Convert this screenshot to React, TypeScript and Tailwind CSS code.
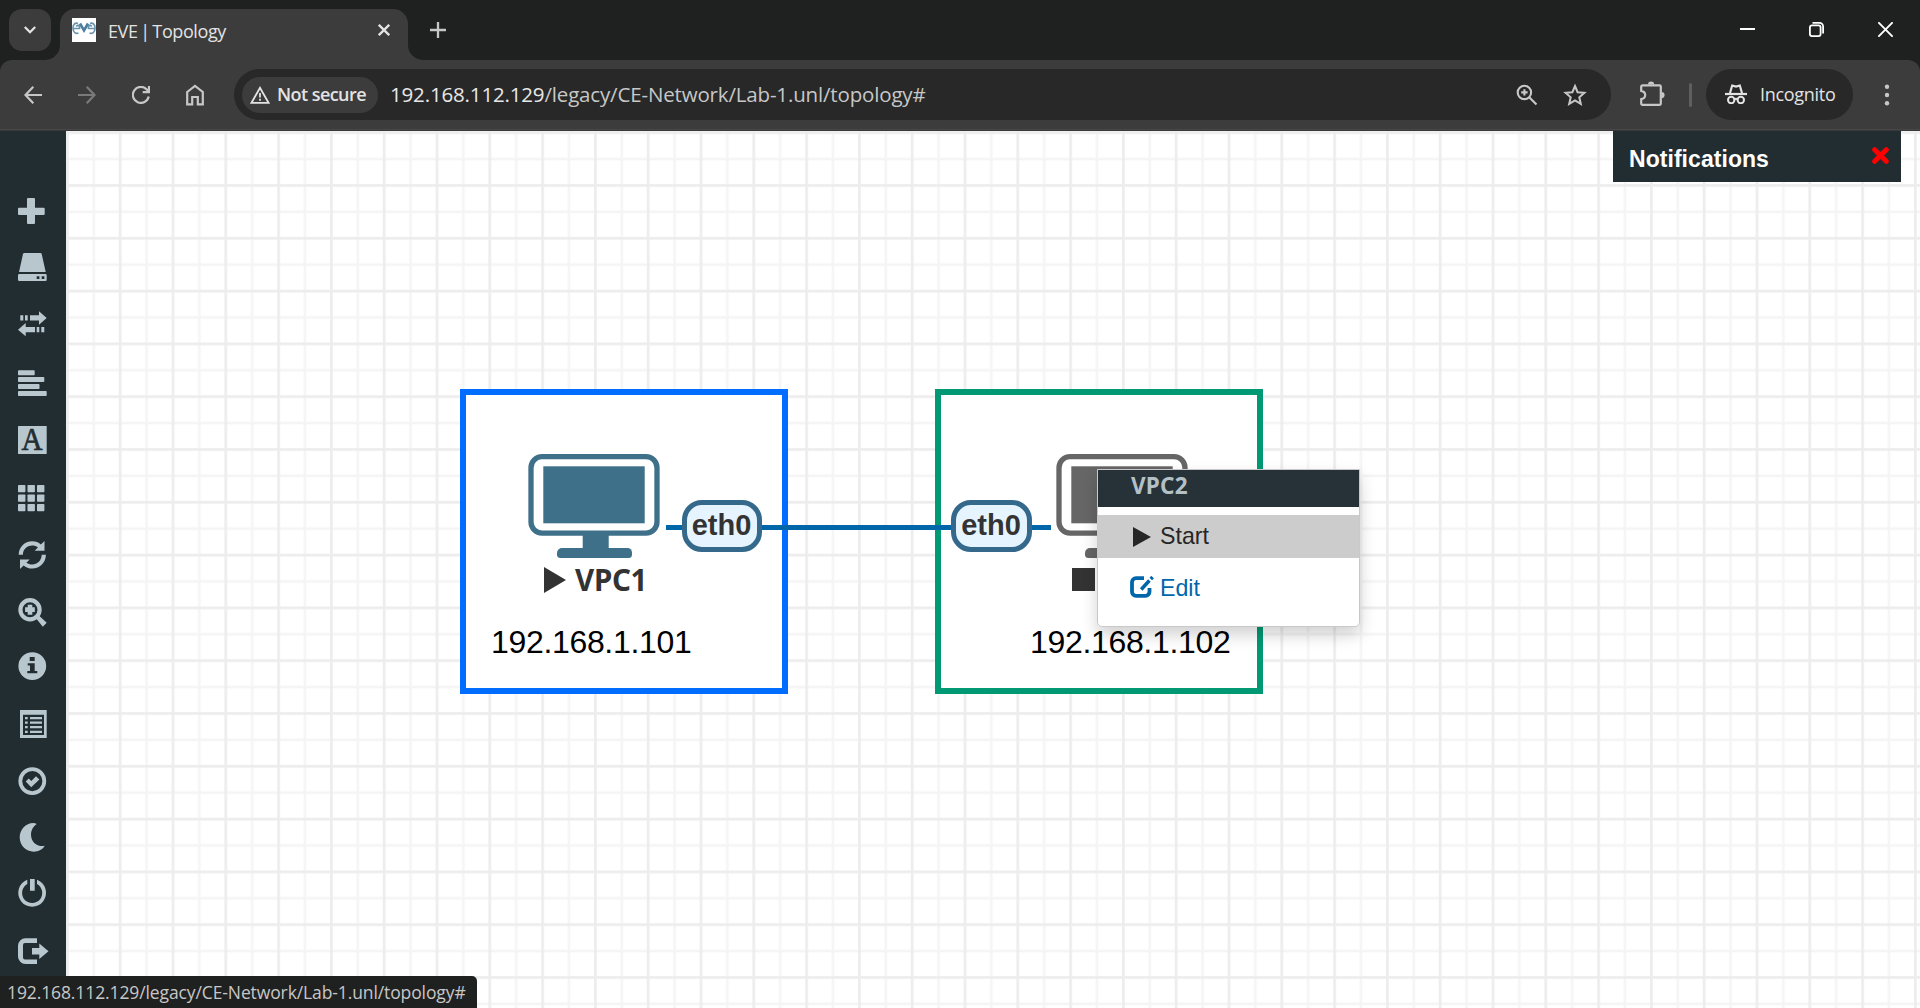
import React from "react";

type IconProps = { className?: string };

const Icon = ({ className, children }: { className?: string; children: React.ReactNode }) => (
  <svg viewBox="0 0 30 30" className={`block h-[30px] w-[32px] shrink-0 overflow-visible ${className ?? ""}`} preserveAspectRatio="xMinYMin" fill="currentColor">
    {children}
  </svg>
);

const sideIcons: { name: string; gap: string; art: React.ReactNode }[] = [
  { name: "add", gap: "mt-[67px]", art: <path d="M10 0h6a1 1 0 0 1 1 1v8.7h8.7a1 1 0 0 1 1 1v5.300a1 1 0 0 1-1 1H17v8a1 1 0 0 1-1 1h-6a1 1 0 0 1-1-1v-8H1a1 1 0 0 1-1-1v-5.300a1 1 0 0 1 1-1h8V1a1 1 0 0 1 1-1z" /> },
  { name: "nodes", gap: "mt-[25px]", art: <path fillRule="evenodd" d="M6.300 0h16.200a1.300 1.300 0 0 1 1.200 1l4 18H1l4-18a1.300 1.300 0 0 1 1.300-1zM1.300 21h26.100a1.300 1.300 0 0 1 1.300 1.300v4.400a1.300 1.300 0 0 1-1.300 1.300H1.300A1.300 1.300 0 0 1 0 26.700v-4.400A1.300 1.300 0 0 1 1.300 21zM18.700 23.200v2.700h2.700v-2.700zM23.700 23.200v2.700h2.700v-2.700z" /> },
  { name: "networks", gap: "mt-[27px]", art: <path d="M2.300 5.300h3v5.300h-3zM7 5.300h2.700v5.300H7zM12 5.300h9V1.200L28.700 8 21 14.700v-4.100h-9zM0 19.700l7.700-6.600v4H17v5.200H7.700v4zM18.700 17h2.600v5.300h-2.600zM23.300 17h3v5.300h-3z" /> },
  { name: "startup-configs", gap: "mt-[29px]", art: <g><rect y="1.200" width="16.700" height="5" rx=".8" /><rect y="8" width="26.300" height="5" rx=".8" /><rect y="15" width="21.500" height="5" rx=".8" /><rect y="22" width="28.700" height="5" rx=".8" /></g> },
  { name: "logical-map", gap: "mt-[27px]", art: <g><rect width="28.700" height="28" rx=".6" /><text x="14" y="23.500" textAnchor="middle" fill="#222d32" stroke="#222d32" strokeWidth=".7" fontFamily="Liberation Serif, serif" fontSize="32" textLength="21" lengthAdjust="spacingAndGlyphs">A</text></g> },
  { name: "grid", gap: "mt-[29px]", art: <g>{[0, 9.5, 19].map((y) => [0, 9.5, 19].map((x) => <rect key={`${x}-${y}`} x={x} y={y} width="7.400" height="7.200" rx=".8" />))}</g> },
  { name: "refresh", gap: "mt-[26px]", art: <path d="M.7 13.700C.7 6.200 6.500.2 14.200.2c3.500 0 6.300 1.100 8.700 3.200L26.500 0v9.700h-9.800l3.200-3.300c-1.600-1.400-3.500-2-5.700-2-5.300 0-9.300 4-9.300 9.300zM27.900 13.700c0 7.700-6 13.900-13.700 13.900-3.400 0-6.300-1.200-8.600-3.200L2 28v-9.500h9.700l-3.300 3.200c1.700 1.200 3.600 1.800 5.800 1.800 5.300 0 9.500-4.400 9.500-9.800z" /> },
  { name: "zoom", gap: "mt-[27px]", art: <g><path fillRule="evenodd" d="M12 0a11.700 11.700 0 1 1 0 23.400A11.700 11.700 0 0 1 12 0zm0 4.200a7.500 7.500 0 1 0 0 15 7.500 7.500 0 0 0 0-15z" /><path d="M17.600 19.700l2.800-2.800 8.300 7.900-3.900 4zM9.700 6.700h4.600v2.600h2.500v4.800h-2.500v2.600H9.700v-2.600H7.100V9.300h2.600z" /></g> },
  { name: "status", gap: "mt-[24px]", art: <path fillRule="evenodd" d="M14.300.2a13.900 13.900 0 1 1 0 27.800 13.900 13.900 0 0 1 0-27.800zM11.700 5v4h5V5zM9.700 11.300v2.300h2.300v5.400H9.300v2.300h10V19h-2.600v-7.700z" /> },
  { name: "objects", gap: "mt-[28px]", art: <path fillRule="evenodd" d="M2 0h26.700v28H2zM5 4.700V25h21V4.700zM7 7h2.700v2.300H7zm5 0h12v2.300H12zM7 11.400h2.700v2.300H7zm5 0h12v2.300H12zM7 16h2.700v2.300H7zm5 0h12v2.300H12zM7 20.700h2.700V23H7zm5 0h12V23H12z" /> },
  { name: "check", gap: "mt-[27px]", art: <path fillRule="evenodd" d="M14.300.2a13.900 13.900 0 1 1 0 27.800 13.900 13.900 0 0 1 0-27.800zm0 3.800a10.100 10.100 0 1 0 0 20.200 10.100 10.100 0 0 0 0-20.200zM7.700 14.400l3.100-3 2.500 2.500 4.700-4.600 3.400 3.100-8.200 7.900z" /> },
  { name: "dark-mode", gap: "mt-[26px]", art: <path d="M18.700.9C15.300 3.200 13 7 13 11.700c0 6.500 5 11.400 11.300 11.400 1 0 1.700-.1 2.500-.3-2.100 3.500-6.300 5.900-11 5.900C7.900 28.700 1.700 22.500 1.700 14.600S7.700.2 15.300.1c1.200 0 2.300.2 3.400.8z" /> },
  { name: "lock", gap: "mt-[25px]", art: <path d="M12 1h4.700v11.800H12zM9.300 1.800v4.300A10.100 10.100 0 1 0 19 6.100V1.800A13.900 13.900 0 1 1 9.300 1.800z" /> },
  { name: "logout", gap: "mt-[29px]", art: <path d="M7.500 1.200H19v4.700H7a2 2 0 0 0-2 2v12.500a2 2 0 0 0 2 2h12V27H7.500A7.500 7.500 0 0 1 0 19.500v-10.800A7.500 7.500 0 0 1 7.500 1.200zM14 10.900h7.300V6.600l9.200 7.700-9.200 7.600v-4.300H14z" /> },
];

const Favicon = () => (
  <svg viewBox="0 0 24 24" className="h-6 w-6 bg-white" fill="none" stroke="#4c7f9f" strokeWidth="2">
    <path d="M6 5.500C3 4.500.8 6.500 1 10.500s2.800 5.500 5.500 4.500M2 10.500h5.500V8.300C7 7 5 7 4.200 8.500" strokeWidth="1.700" opacity=".85" />
    <path d="M18 5.500c3-1 5.200 1 5 5s-2.800 5.500-5.500 4.500M22 10.500h-5.500V8.300C17 7 19 7 19.800 8.500" strokeWidth="1.700" opacity=".85" />
    <path d="M8 5.500l4 7 4-7" strokeWidth="2.600" />
  </svg>
);

const TabStrip = () => (
  <div className="flex h-[60px] items-start bg-[#1f2120] pl-[9px] pt-[9px]">
    <div className="flex h-[42px] w-[42px] items-center justify-center rounded-[13px] bg-[#3c3c3c]">
      <svg viewBox="0 0 12 8" className="h-2 w-3" fill="none" stroke="#e3e3e3" strokeWidth="2.300"><path d="M.8 1l5.200 5.200L11.200 1" /></svg>
    </div>
    <div className="relative ml-[9px] flex h-[51px] w-[348px] items-start rounded-t-[15px] bg-[#3c3c3c] pl-3 pt-[9px]">
      <svg viewBox="0 0 15 15" className="absolute -left-[15px] bottom-0 h-[15px] w-[15px]" fill="#3c3c3c"><path d="M15 0v15H0A15 15 0 0 0 15 0z" /></svg>
      <svg viewBox="0 0 15 15" className="absolute -right-[15px] bottom-0 h-[15px] w-[15px]" fill="#3c3c3c"><path d="M0 0v15h15A15 15 0 0 1 0 0z" /></svg>
      <Favicon />
      <span className="ml-3 w-[260px] whitespace-nowrap text-[18px] leading-[26px] tracking-[-0.4px] [word-spacing:-1.6px] text-[#e3e3e3]">EVE | Topology</span>
      <svg viewBox="0 0 12 12" className="ml-[10px] mt-[6px] h-3 w-3" fill="none" stroke="#e3e3e3" strokeWidth="2.300"><path d="M.8.8l10.400 10.400M11.200.8L.8 11.200" /></svg>
    </div>
    <svg viewBox="0 0 16 16" className="ml-[22px] mt-[13px] h-4 w-4" fill="none" stroke="#c7c7c7" strokeWidth="2.300"><path d="M8 0v16M0 8h16" /></svg>
    <div className="ml-auto mr-[27px] mt-[13px] flex items-center gap-[54px]">
      <svg viewBox="0 0 15 15" className="h-[15px] w-[15px]" stroke="#fff" strokeWidth="2"><path d="M0 7h15" /></svg>
      <svg viewBox="0 0 15 15" className="h-[15px] w-[15px]" fill="none" stroke="#fff" strokeWidth="1.800"><rect x=".9" y="3.400" width="10.700" height="10.700" rx="2" /><path d="M3.500.9h7a3.600 3.600 0 0 1 3.600 3.600v7" /></svg>
      <svg viewBox="0 0 15 15" className="h-[15px] w-[15px]" stroke="#fff" strokeWidth="1.900"><path d="M.3.3l14.400 14.400M14.700.3L.3 14.700" /></svg>
    </div>
  </div>
);

const Toolbar = () => (
  <div className="bg-[#1f2120]">
    <div className="flex h-[71px] items-start rounded-t-[12px] border-b border-[#383838] bg-[#3c3c3c] pt-[9px] shadow-[inset_0_-1px_0_#474747]">
      <div className="flex h-[51px] w-[234px] items-center pl-6 text-[#c7c7c7]">
        <svg viewBox="0 0 18 18" className="h-[18px] w-[18px]" fill="none" stroke="currentColor" strokeWidth="2.200"><path d="M18 9H1.500M9.300.8L1.500 9l7.800 8.200" /></svg>
        <svg viewBox="0 0 18 18" className="ml-9 h-[18px] w-[18px] text-[#7a7a7a]" fill="none" stroke="currentColor" strokeWidth="2.200"><path d="M0 9h16.500M8.700.8L16.500 9l-7.800 8.200" /></svg>
        <svg viewBox="0 0 18 18" className="ml-9 h-[18px] w-[18px]" fill="none" stroke="currentColor" strokeWidth="2.200"><path d="M16.700 10.500A8 8 0 1 1 14.700 3.400L17 5.700M17 0v6.200h-6.300" /></svg>
        <svg viewBox="0 0 20 22" className="ml-[35px] h-[22px] w-5" fill="none" stroke="currentColor" strokeWidth="2.200"><path d="M2.200 8L10 2l7.800 6v12.300h-5v-7.300H7.200v7.300h-5z" /></svg>
      </div>
      <div className="flex h-[51px] w-[1377px] items-center rounded-full bg-[#282828] pl-2">
        <div className="flex h-9 w-[136px] items-center rounded-full bg-[#3c3c3c] pl-2">
          <svg viewBox="0 0 20 18" className="h-[18px] w-5" fill="none" stroke="#e3e3e3" strokeWidth="1.800"><path d="M1.500 16.800L10 1.800l8.500 15z" /><path d="M10 7v4.500M10 12.800v2" /></svg>
          <span className="-mt-[2px] ml-[7px] whitespace-nowrap text-[18px] font-semibold leading-6 tracking-[-0.55px] text-[#e3e3e3]">Not secure</span>
        </div>
        <div className="-mt-[2px] ml-3 whitespace-nowrap text-[20.500px] leading-7 tracking-[-0.16px] text-[#c7c7c7]"><span className="text-[#e8e8e8]">192.168.112.129</span>/legacy/CE-Network/Lab-1.unl/topology#</div>
        <div className="ml-auto mr-6 flex items-center gap-[25px]">
          <svg viewBox="0 0 22 22" className="h-[22px] w-[22px]" fill="none" stroke="#c7c7c7" strokeWidth="2.100"><circle cx="8.400" cy="8.400" r="6.700" /><path d="M13.200 13.200l7.300 7.300M8.400 5.200v6.400M5.200 8.400h6.400" /></svg>
          <svg viewBox="0 0 24 24" className="h-6 w-6" fill="none" stroke="#c7c7c7" strokeWidth="2"><path d="M12 3l2.600 6.200 6.800.6-5.100 4.500 1.500 6.600-5.800-3.500-5.800 3.500 1.500-6.600-5.100-4.500 6.800-.6z" /></svg>
        </div>
      </div>
      <div className="flex h-[51px] w-[95px] items-center pl-[28px]">
        <svg viewBox="0 0 26 26" className="-mt-[2px] h-[26px] w-[26px]" fill="none" stroke="#c7c7c7" strokeWidth="2.200"><path d="M3.500 4.300h17a1.300 1.300 0 0 1 1.300 1.300v17a1.300 1.300 0 0 1-1.300 1.300h-17a1.300 1.300 0 0 1-1.300-1.300v-4.400c5.300-1 5.300-7.300 0-8.300V5.600a1.300 1.300 0 0 1 1.300-1.300z" /><path d="M9 3.600a3.100 3.100 0 0 1 6.200 0zM22.500 11a3.100 3.100 0 0 1 0 6.200z" fill="#c7c7c7" stroke="none" /></svg>
        <div className="ml-6 h-6 w-[3px] rounded-full bg-[#5f5f5f]" />
      </div>
      <div className="flex h-[51px] w-[147px] items-center rounded-full bg-[#282828] pl-[19px]">
        <svg viewBox="0 0 22 20" className="-mt-[2px] h-5 w-[22px] text-[#e3e3e3]" fill="none" stroke="currentColor" strokeWidth="2"><path d="M0 10h22" strokeWidth="2.200" /><path d="M5 9l2.200-7.500 3.800 1 3.800-1L17 9" strokeWidth="2.200" /><circle cx="6.200" cy="16" r="3.200" /><circle cx="15.800" cy="16" r="3.200" /><path d="M9 15.500q2-1.300 4 0" /></svg>
        <span className="-mt-[2px] ml-[13px] text-[18px] leading-6 tracking-[-0.3px] text-[#e3e3e3]">Incognito</span>
      </div>
      <svg viewBox="0 0 6 22" className="ml-[31px] mt-[15px] h-[22px] w-[6px]" fill="#c7c7c7"><circle cx="3" cy="2.700" r="2.200" /><circle cx="3" cy="11" r="2.200" /><circle cx="3" cy="19.300" r="2.200" /></svg>
    </div>
  </div>
);

const Sidebar = () => (
  <nav className="flex w-[66px] shrink-0 flex-col bg-[#222d32] pl-[18px] text-[#b8c7ce]">
    {sideIcons.map((i) => (
      <Icon key={i.name} className={i.gap}>{i.art}</Icon>
    ))}
  </nav>
);

const Monitor = ({ className }: IconProps) => (
  <svg viewBox="0 0 132 105" className={`absolute h-[105px] w-[132px] ${className ?? ""}`} fill="none" stroke="currentColor">
    <rect x="3" y="2.700" width="126" height="76.400" rx="11" fill="#fff" strokeWidth="5.300" />
    <g fill="currentColor" stroke="none">
      <rect x="15.300" y="12.300" width="101.400" height="57" />
      <rect x="54.700" y="80" width="26" height="16" />
      <path d="M34 94h65.500a4.500 4.500 0 0 1 4.500 4.500v2a3.500 3.500 0 0 1-3.500 3.500H32.500a3.500 3.500 0 0 1-3.500-3.500V99a5 5 0 0 1 5-5z" />
    </g>
  </svg>
);

const Port = ({ className }: IconProps) => (
  <div className={`absolute flex h-[52px] items-center justify-center rounded-[20px] border-[5px] border-[#35698c] bg-[#e6f4ff] pb-[2px] text-[29px] font-bold leading-none text-[#333] ${className ?? ""}`}>eth0</div>
);

const Canvas = () => (
  <main className="relative flex-1 overflow-hidden bg-white font-['Liberation_Sans',Arial,sans-serif]">
    <svg className="absolute inset-0 h-full w-full">
      <defs>
        <pattern id="grid" x="0" y="0.300" width="52.800" height="52.800" patternUnits="userSpaceOnUse">
          <path d="M27.800 0v52.800M0 27.800h52.800" stroke="#f5f5f6" strokeWidth="2.600" />
          <path d="M1.400 0v52.800M0 1.400h52.800" stroke="#ededee" strokeWidth="2.700" />
        </pattern>
      </defs>
      <rect width="100%" height="100%" fill="url(#grid)" />
    </svg>
    <div className="absolute left-[394px] top-[258px] h-[305px] w-[328px] border-[6px] border-[#006dff] bg-white" />
    <div className="absolute left-[869px] top-[258px] h-[305px] w-[328px] border-[6px] border-[#009973] bg-white" />
    <Monitor className="left-[462px] top-[323px] text-[#3f708a]" />
    <Monitor className="left-[990px] top-[323px] text-[#666]" />
    <div className="absolute left-[600px] top-[394px] h-[5px] w-[385px] bg-[#0066aa]" />
    <Port className="left-[615.500px] top-[369px] w-[80px]" />
    <Port className="left-[884.500px] top-[369px] w-[81px]" />
    <div className="absolute left-[478px] top-[435px] flex h-[27px] items-center text-[#333]">
      <svg viewBox="0 0 22 26" className="h-[26px] w-[22px]" fill="currentColor"><path d="M0 0l22 13L0 26z" /></svg>
      <span className="ml-[9px] font-['Noto_Sans',sans-serif] text-[29.500px] font-bold leading-[27px] tracking-[-0.3px]">VPC1</span>
    </div>
    <div className="absolute left-[1006px] top-[437px] h-[23px] w-[23px] bg-[#333]" />
    <div className="absolute left-[425px] top-[491px] text-[32px] leading-[40px] tracking-[-0.33px] text-black">192.168.1.101</div>
    <div className="absolute left-[964px] top-[491px] text-[32px] leading-[40px] tracking-[-0.33px] text-black">192.168.1.102</div>

    <div className="absolute left-[1031px] top-[338px] h-[158px] w-[263px] rounded-b-[5px] shadow-[0_8px_16px_rgba(0,0,0,0.18)]" />
    <div className="absolute left-[1031px] top-[338px] h-[158px] w-[263px] overflow-hidden rounded-b-[5px] border border-[#c9c9c9] bg-white">
      <div className="-mt-px h-[38px] bg-[#263238] pl-[33px] font-['Noto_Sans',sans-serif] text-[22.500px] font-bold leading-[34px] tracking-[0.2px] text-[#b3c1c7]">VPC2</div>
      <div className="mt-2 flex h-[43px] items-center bg-[#ccc] pl-[35px] text-[23.200px] text-[#262626]">
        <svg viewBox="0 0 18 20" className="h-5 w-[18px]" fill="currentColor"><path d="M0 0l18 10L0 20z" /></svg>
        <span className="ml-[9px]">Start</span>
      </div>
      <div className="mt-[9px] flex h-[43px] items-center pl-8 text-[23.200px] text-[#0066aa]">
        <svg viewBox="0 0 24 22" className="-mt-[4px] h-[22px] w-6" fill="none" stroke="currentColor"><path d="M14 2.200H6A4 4 0 0 0 2 6.200v9.600a4 4 0 0 0 4 4h9.500a4 4 0 0 0 4-4V12" strokeWidth="3.800" /><path d="M11.200 13.500l8.200-9" strokeWidth="3.500" /><path d="M20.800 3l1.800-2" strokeWidth="3.500" /></svg>
        <span className="ml-[6px]">Edit</span>
      </div>
    </div>

    <div className="absolute left-[1547px] top-0 flex h-[51px] w-[288px] items-start bg-[#222d32] pl-4 text-white">
      <span className="mt-[14px] text-[23px] font-bold leading-[28px] tracking-[0.05px]">Notifications</span>
      <svg viewBox="0 0 17 17" className="ml-auto mr-3 mt-4 h-[17px] w-[17px]" stroke="#f00" strokeWidth="5" strokeLinecap="round"><path d="M2.700 2.700l11.600 11.600M14.300 2.700L2.700 14.300" /></svg>
    </div>
  </main>
);

export default function App() {
  return (
    <div className="relative flex h-[1008px] w-[1920px] flex-col overflow-hidden font-['Open_Sans','Noto_Sans',sans-serif]">
      <TabStrip />
      <Toolbar />
      <div className="flex min-h-0 flex-1">
        <Sidebar />
        <Canvas />
      </div>
      <div className="absolute bottom-0 left-0 h-8 w-[477px] whitespace-nowrap rounded-tr-[5px] bg-[#1f2020] pl-[7px] text-[17.500px] leading-[32px] tracking-[-0.11px] text-[#c7c7c7]">192.168.112.129/legacy/CE-Network/Lab-1.unl/topology#</div>
    </div>
  );
}
